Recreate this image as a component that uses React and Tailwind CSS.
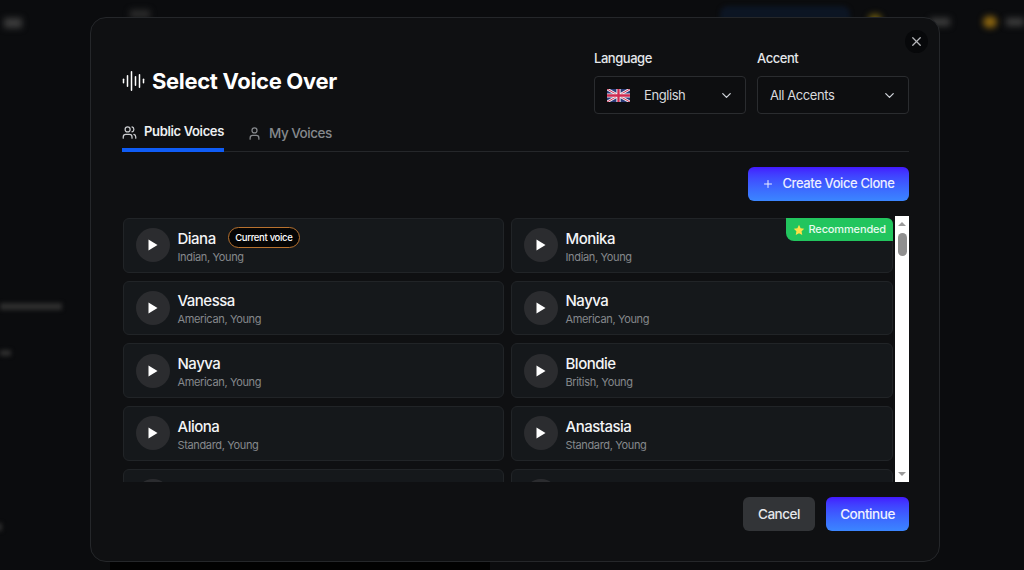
import React from "react";
import { Users, User, Plus, ChevronDown, X } from "lucide-react";

const voices = [
  ["Diana", "Indian, Young", true, false],
  ["Monika", "Indian, Young", false, true],
  ["Vanessa", "American, Young", false, false],
  ["Nayva", "American, Young", false, false],
  ["Nayva", "American, Young", false, false],
  ["Blondie", "British, Young", false, false],
  ["Aliona", "Standard, Young", false, false],
  ["Anastasia", "Standard, Young", false, false],
  ["", "", false, false],
  ["", "", false, false],
];

function Wave() {
  const bars = [[1.5, 5], [5.5, 12], [9.5, 20], [13.5, 10], [17.5, 14], [21.5, 5]];
  return (
    <svg width="23" height="20" viewBox="0 0 23 20" className="shrink-0">
      {bars.map(([x, h]) => (
        <rect key={x} x={x - 0.75} y={10 - h / 2} width="1.5" height={h} rx="0.75" fill="#fff" />
      ))}
    </svg>
  );
}

function Flag() {
  return (
    <svg width="23" height="13" viewBox="0 0 60 34" className="shrink-0">
      <rect width="60" height="34" fill="#2a3a78" />
      <path d="M0 0L60 34M60 0L0 34" stroke="#f3f3f5" strokeWidth="7" />
      <path d="M0 0L60 34M60 0L0 34" stroke="#cf2a4f" strokeWidth="2.5" />
      <path d="M30 0V34M0 17H60" stroke="#f3f3f5" strokeWidth="11" />
      <path d="M30 0V34M0 17H60" stroke="#cf2a4f" strokeWidth="6" />
    </svg>
  );
}

function Card({ name, sub, current, recommended }) {
  return (
    <div className="relative flex h-[54.67px] items-center gap-[7.5px] rounded-md border border-[#212427] bg-[#15181b] pl-3">
      <div className="flex h-[34px] w-[34px] shrink-0 items-center justify-center rounded-full bg-[#2b2c2f]">
        <svg width="10" height="12" viewBox="0 0 10 12"><path d="M0.5 0.5L9.5 6L0.5 11.5Z" fill="#fff" /></svg>
      </div>
      {name && (
        <div className="min-w-0 pt-[3px]">
          <div className="flex items-center gap-3 leading-[20px]">
            <span className="text-[15px] font-medium tracking-[-0.5px] text-[#f3f4f6]">{name}</span>
            {current && (
              <span className="-mt-[2px] flex h-[21px] items-center rounded-full border border-[#b8722f] bg-[#050505] px-[6.5px] text-[9.5px] font-medium tracking-[-0.32px] text-white">Current voice</span>
            )}
          </div>
          <div className="text-[11px] leading-[16px] tracking-[-0.35px] text-[#85888c]">{sub}</div>
        </div>
      )}
      {recommended && (
        <div className="absolute -top-px -right-px flex h-[23px] items-center gap-[4px] rounded-tr-md rounded-bl-lg bg-[#22c55e] px-[7px] text-[11px] font-medium tracking-[-0.15px] text-[#e6fbee]">
          <svg width="12" height="12" viewBox="0 0 24 24"><path d="M12 1.5l3.2 6.8 7.3 1-5.3 5.2 1.3 7.5-6.5-3.6L5.5 22l1.3-7.5L1.5 9.3l7.3-1z" fill="#fde047" /></svg>
          Recommended
        </div>
      )}
    </div>
  );
}

function Select({ label, children }) {
  return (
    <div className="w-[152px]">
      <div className="h-[17px] text-[13px] font-medium leading-[17px] tracking-[-0.45px] text-[#e5e7eb]">{label}</div>
      <div className="mt-[9px] flex h-[38px] items-center justify-between rounded-[4px] border border-[#2a2c2f] bg-[#0d0e10] pl-3 pr-[11px] pt-px text-[13px] tracking-[-0.42px] text-[#d9dbde]">
        {children}
        <ChevronDown size={15} className="text-[#d1d5db]" />
      </div>
    </div>
  );
}

export default function App() {
  return (
    <div className="relative h-[570px] w-[1024px] overflow-hidden bg-[#0b0c0e]" style={{ fontFamily: "Inter, 'Liberation Sans', sans-serif" }}>
      {/* blurred page behind the dialog */}
      <div className="absolute left-[4px] top-[18px] h-[10px] w-[18px] bg-[#3c3c3c] blur-[3px]" />
      <div className="absolute left-[130px] top-[10px] h-[8px] w-[20px] bg-[#2c2c2c] blur-[3px]" />
      <div className="absolute left-[720px] top-[6px] h-[30px] w-[130px] rounded-lg bg-[#0c1523] blur-[2px]" />
      <div className="absolute left-[868px] top-[14px] h-[12px] w-[14px] rounded-full bg-[#6b5a10] blur-[3px]" />
      <div className="absolute left-[930px] top-[18px] h-[8px] w-[20px] bg-[#3c3c3c] blur-[3px]" />
      <div className="absolute left-[983px] top-[16px] h-[12px] w-[14px] rounded-full bg-[#8a6410] blur-[3px]" />
      <div className="absolute left-[1006px] top-[18px] h-[8px] w-[18px] bg-[#3c3c3c] blur-[3px]" />
      <div className="absolute left-0 top-[303px] h-[7px] w-[62px] bg-[#2e2e2e] blur-[2px]" />
      <div className="absolute left-0 top-[350px] h-[6px] w-[11px] bg-[#2e2e2e] blur-[2px]" />
      <div className="absolute -left-[4px] top-[523px] h-[8px] w-[6px] bg-[#2c2c2c] blur-[2px]" />
      <div className="absolute left-[110px] top-[560px] h-[10px] w-[380px] bg-[#020202]" />

      {/* dialog */}
      <div className="absolute left-[90px] top-[17px] h-[545px] w-[850px] rounded-2xl border border-[#25272a] bg-[#0f1012] pl-[31px] pr-[30px] pt-[32px]">
        <button className="absolute right-[11px] top-[12px] flex h-[23px] w-[23px] items-center justify-center rounded-full bg-[#07080a] text-[#b5b7ba]">
          <X size={15} />
        </button>

        <div className="flex items-center justify-between">
          <div className="-mt-[2px] flex items-center gap-[7px]">
            <Wave />
            <h1 className="text-[22px] font-bold leading-[28px] tracking-[-0.33px] text-white">Select Voice Over</h1>
          </div>
          <div className="flex gap-[11px]">
            <Select label="Language">
              <div className="flex items-center gap-[14px]"><Flag /><span>English</span></div>
            </Select>
            <Select label="Accent"><span>All Accents</span></Select>
          </div>
        </div>

        <div className="mt-[1px] flex h-[37px] items-stretch gap-[23px] border-b border-[#25272a]">
          <div className="flex h-[37px] items-center gap-[7px] border-b-[4px] border-[#0f5cf5] pt-px text-[13px] font-semibold tracking-[-0.35px] text-[#eef0f3]">
            <Users size={15} className="text-[#c9cbce]" />
            Public Voices
          </div>
          <div className="flex items-center gap-[7px] pt-[1px] text-[13.5px] font-medium tracking-[-0.5px] text-[#85888c]">
            <User size={15} />
            My Voices
          </div>
        </div>

        <div className="mt-[15px] flex justify-end">
          <button className="flex h-[34px] w-[161px] items-center justify-center gap-[8px] rounded-md bg-gradient-to-b from-[#4316ff] to-[#3b86ff] text-[13px] font-medium tracking-[-0.4px] text-[#eceeff]">
            <Plus size={12} />
            Create Voice Clone
          </button>
        </div>

        <div className="mt-[15px] flex h-[266px] overflow-hidden pl-px pt-[2px]">
          <div className="grid flex-1 grid-cols-[381px_382px] content-start gap-x-[7px] gap-y-[8px]">
            {voices.map((v, i) => (
              <Card key={i} name={v[0]} sub={v[1]} current={v[2]} recommended={v[3]} />
            ))}
          </div>
          <div className="relative -mt-[2px] ml-[2px] h-[266px] w-[14px] shrink-0 bg-white">
            <div className="absolute left-[3px] top-[6px] h-0 w-0 border-x-[4px] border-b-[4px] border-x-transparent border-b-[#9a9a9a]" />
            <div className="absolute left-[3px] top-[17px] h-[23px] w-[9px] rounded-full bg-[#8f8f8f]" />
            <div className="absolute bottom-[6px] left-[3px] h-0 w-0 border-x-[4px] border-t-[4px] border-x-transparent border-t-[#9a9a9a]" />
          </div>
        </div>

        <div className="mt-[15px] flex justify-end gap-[11px]">
          <button className="h-[34px] w-[72px] rounded-md bg-[#323437] text-[13.5px] font-medium tracking-[-0.45px] text-[#e5e7eb]">Cancel</button>
          <button className="h-[34px] w-[83px] rounded-md bg-gradient-to-b from-[#4316ff] to-[#3b86ff] text-[13.5px] font-medium tracking-[-0.45px] text-[#f0f1ff]">Continue</button>
        </div>
      </div>
    </div>
  );
}
